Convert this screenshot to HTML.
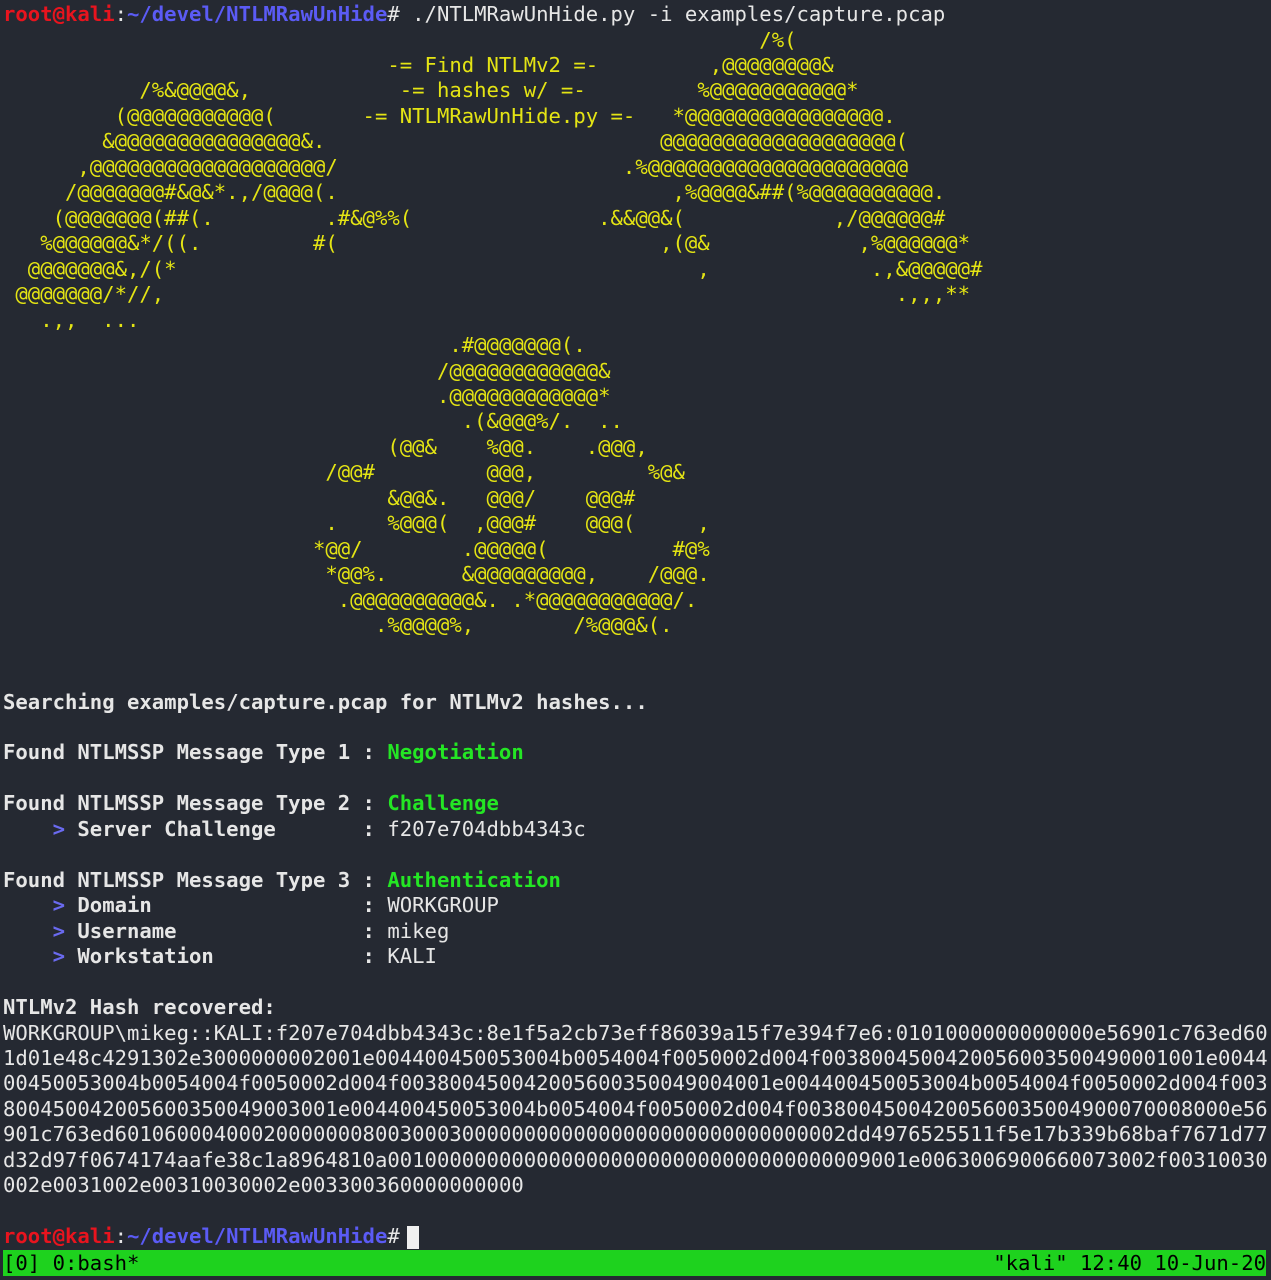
<!DOCTYPE html>
<html><head><meta charset="utf-8"><style>
html,body{margin:0;padding:0;background:#252932;width:1271px;height:1280px;overflow:hidden}
body{position:relative;font-family:"DejaVu Sans Mono","Liberation Mono",monospace;font-size:20.6px;color:#e6e6e6}
.r{position:absolute;left:3px;height:25.46px;line-height:25.46px;white-space:pre;width:1268px}
.r span{position:absolute;top:0}
.y{color:#e4e414}
.b{font-weight:bold}
.g{color:#24e624;font-weight:bold}
.red{color:#e8141e;font-weight:bold}
.bl{color:#5b5bf5;font-weight:bold}
.ar{color:#6a6af0;font-weight:bold}
#bar{position:absolute;left:3px;top:1250px;width:1263px;height:26px;background:#1ed21e;color:#000;line-height:26px;white-space:pre}
#cur{position:absolute;left:407px;top:1226px;width:12px;height:23px;background:#f0f0f0}
</style></head><body>
<div class="r" style="top:2px"><span class="red">root@kali</span><span style="left:9ch">:</span><span class="bl" style="left:10ch">~/devel/NTLMRawUnHide</span><span style="left:31ch">#&nbsp;./NTLMRawUnHide.py -i examples/capture.pcap</span></div>
<div class="y">
<div class="r" style="top:27.5px"><span style="left:61ch">/%(</span></div>
<div class="r" style="top:52.9px"><span style="left:31ch">-= Find NTLMv2 =-</span><span style="left:57ch">,@@@@@@@@&amp;</span></div>
<div class="r" style="top:78.4px"><span style="left:11ch">/%&amp;@@@@&amp;,</span><span style="left:32ch">-= hashes w/ =-</span><span style="left:56ch">%@@@@@@@@@@@*</span></div>
<div class="r" style="top:103.8px"><span style="left:9ch">(@@@@@@@@@@@(</span><span style="left:29ch">-= NTLMRawUnHide.py =-</span><span style="left:54ch">*@@@@@@@@@@@@@@@@.</span></div>
<div class="r" style="top:129.3px"><span style="left:8ch">&amp;@@@@@@@@@@@@@@@&amp;.</span><span style="left:53ch">@@@@@@@@@@@@@@@@@@@(</span></div>
<div class="r" style="top:154.8px"><span style="left:6ch">,@@@@@@@@@@@@@@@@@@@/</span><span style="left:50ch">.%@@@@@@@@@@@@@@@@@@@@@</span></div>
<div class="r" style="top:180.2px"><span style="left:5ch">/@@@@@@@#&amp;@&amp;*.,/@@@@(.</span><span style="left:54ch">,%@@@@&amp;##(%@@@@@@@@@@.</span></div>
<div class="r" style="top:205.7px"><span style="left:4ch">(@@@@@@@(##(.</span><span style="left:26ch">.#&amp;@%%(</span><span style="left:48ch">.&amp;&amp;@@&amp;(</span><span style="left:67ch">,/@@@@@@#</span></div>
<div class="r" style="top:231.2px"><span style="left:3ch">%@@@@@@&amp;*/((.</span><span style="left:25ch">#(</span><span style="left:53ch">,(@&amp;</span><span style="left:69ch">,%@@@@@@*</span></div>
<div class="r" style="top:256.6px"><span style="left:2ch">@@@@@@@&amp;,/(*</span><span style="left:56ch">,</span><span style="left:70ch">.,&amp;@@@@@#</span></div>
<div class="r" style="top:282.1px"><span style="left:1ch">@@@@@@@/*//,</span><span style="left:72ch">.,,,**</span></div>
<div class="r" style="top:307.6px"><span style="left:3ch">.,,  ...</span></div>
<div class="r" style="top:333px"><span style="left:36ch">.#@@@@@@@(.</span></div>
<div class="r" style="top:358.5px"><span style="left:35ch">/@@@@@@@@@@@@&amp;</span></div>
<div class="r" style="top:384px"><span style="left:35ch">.@@@@@@@@@@@@*</span></div>
<div class="r" style="top:409.4px"><span style="left:37ch">.(&amp;@@@%/.</span><span style="left:48ch">..</span></div>
<div class="r" style="top:434.9px"><span style="left:31ch">(@@&amp;</span><span style="left:39ch">%@@.</span><span style="left:47ch">.@@@,</span></div>
<div class="r" style="top:460.3px"><span style="left:26ch">/@@#</span><span style="left:39ch">@@@,</span><span style="left:52ch">%@&amp;</span></div>
<div class="r" style="top:485.8px"><span style="left:31ch">&amp;@@&amp;.</span><span style="left:39ch">@@@/</span><span style="left:47ch">@@@#</span></div>
<div class="r" style="top:511.3px"><span style="left:26ch">.</span><span style="left:31ch">%@@@(</span><span style="left:38ch">,@@@#</span><span style="left:47ch">@@@(</span><span style="left:56ch">,</span></div>
<div class="r" style="top:536.7px"><span style="left:25ch">*@@/</span><span style="left:37ch">.@@@@@(</span><span style="left:54ch">#@%</span></div>
<div class="r" style="top:562.2px"><span style="left:26ch">*@@%.</span><span style="left:37ch">&amp;@@@@@@@@@,</span><span style="left:52ch">/@@@.</span></div>
<div class="r" style="top:587.7px"><span style="left:27ch">.@@@@@@@@@@&amp;.</span><span style="left:41ch">.*@@@@@@@@@@@/.</span></div>
<div class="r" style="top:613.1px"><span style="left:30ch">.%@@@@%,</span><span style="left:46ch">/%@@@&amp;(.</span></div>
</div>
<div class="r b" style="top:689.5px">Searching examples/capture.pcap for NTLMv2 hashes...</div>
<div class="r" style="top:740.4px"><span class="b">Found NTLMSSP Message Type 1 :</span><span class="g" style="left:31ch">Negotiation</span></div>
<div class="r" style="top:791.3px"><span class="b">Found NTLMSSP Message Type 2 :</span><span class="g" style="left:31ch">Challenge</span></div>
<div class="r" style="top:816.8px"><span class="ar" style="left:4ch">&gt;</span><span class="b" style="left:6ch">Server Challenge</span><span class="b" style="left:29ch">:</span><span style="left:31ch">f207e704dbb4343c</span></div>
<div class="r" style="top:867.7px"><span class="b">Found NTLMSSP Message Type 3 :</span><span class="g" style="left:31ch">Authentication</span></div>
<div class="r" style="top:893.2px"><span class="ar" style="left:4ch">&gt;</span><span class="b" style="left:6ch">Domain</span><span class="b" style="left:29ch">:</span><span style="left:31ch">WORKGROUP</span></div>
<div class="r" style="top:918.7px"><span class="ar" style="left:4ch">&gt;</span><span class="b" style="left:6ch">Username</span><span class="b" style="left:29ch">:</span><span style="left:31ch">mikeg</span></div>
<div class="r" style="top:944.1px"><span class="ar" style="left:4ch">&gt;</span><span class="b" style="left:6ch">Workstation</span><span class="b" style="left:29ch">:</span><span style="left:31ch">KALI</span></div>
<div class="r b" style="top:995px">NTLMv2 Hash recovered:</div>
<div class="r" style="top:1020.5px">WORKGROUP\mikeg::KALI:f207e704dbb4343c:8e1f5a2cb73eff86039a15f7e394f7e6:0101000000000000e56901c763ed60</div>
<div class="r" style="top:1046px">1d01e48c4291302e3000000002001e004400450053004b0054004f0050002d004f0038004500420056003500490001001e0044</div>
<div class="r" style="top:1071.4px">00450053004b0054004f0050002d004f003800450042005600350049004001e004400450053004b0054004f0050002d004f003</div>
<div class="r" style="top:1096.9px">800450042005600350049003001e004400450053004b0054004f0050002d004f00380045004200560035004900070008000e56</div>
<div class="r" style="top:1122.4px">901c763ed60106000400020000000800300030000000000000000000000000000002dd4976525511f5e17b339b68baf7671d77</div>
<div class="r" style="top:1147.8px">d32d97f0674174aafe38c1a8964810a001000000000000000000000000000000000009001e0063006900660073002f00310030</div>
<div class="r" style="top:1173.3px">002e0031002e00310030002e003300360000000000</div>
<div class="r" style="top:1224.2px"><span class="red">root@kali</span><span style="left:9ch">:</span><span class="bl" style="left:10ch">~/devel/NTLMRawUnHide</span><span style="left:31ch">#</span></div>
<div id="cur"></div>
<div id="bar"><span style="position:absolute;left:0">[0] 0:bash*</span><span style="position:absolute;right:0">"kali" 12:40 10-Jun-20</span></div>
</body></html>
